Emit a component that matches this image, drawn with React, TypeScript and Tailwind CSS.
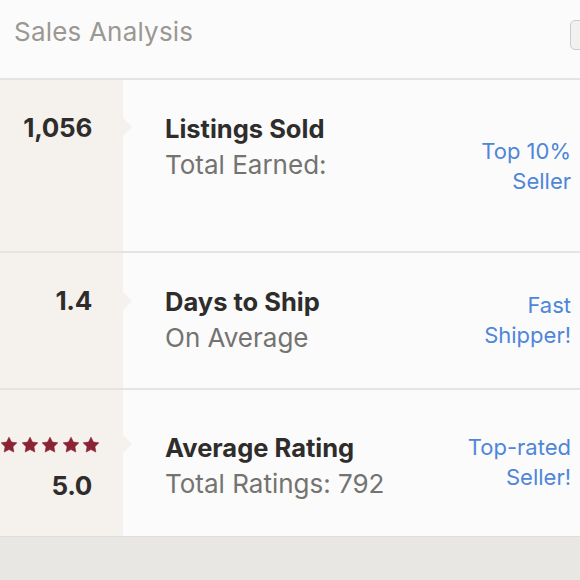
import React from "react";

type Row = {
  height: string;
  value: React.ReactNode;
  title: string;
  sub: string;
  badge: string[];
  textPt: string;
  badgePt: string;
  notchTop: string;
};

function Star() {
  return (
    <svg width="18" height="18" viewBox="0 0 24 24" className="shrink-0">
      <path
        d="M12 1.5L15.23 8.05 22.46 9.1 17.23 14.2 18.47 21.4 12 18 5.53 21.4 6.77 14.2 1.54 9.1 8.77 8.05z"
        fill="#8a2334"
        stroke="#8a2334"
        strokeWidth="0.8"
        strokeLinejoin="round"
      />
    </svg>
  );
}

const num = "text-[26px] font-bold text-[#2e2d2c] leading-none pr-[31px] tracking-[-0.3px]";

const rows: Row[] = [
  {
    height: "h-[173px] border-b-2 border-[#e6e4e1]",
    value: <div className={`${num} pt-[35px]`}>1,056</div>,
    title: "Listings Sold",
    sub: "Total Earned:",
    badge: ["Top 10%", "Seller"],
    textPt: "pt-[34px]",
    badgePt: "pt-[56px]",
    notchTop: "top-[38px]",
  },
  {
    height: "h-[137px] border-b-2 border-[#e6e4e1]",
    value: <div className={`${num} pt-[35px]`}>1.4</div>,
    title: "Days to Ship",
    sub: "On Average",
    badge: ["Fast", "Shipper!"],
    textPt: "pt-[34px]",
    badgePt: "pt-[37px]",
    notchTop: "top-[39px]",
  },
  {
    height: "h-[146px]",
    value: (
      <div className="flex flex-col items-end pt-[46px]">
        <div className="flex gap-[2.5px] pr-[25px] -mr-[2px]">
          <Star />
          <Star />
          <Star />
          <Star />
          <Star />
        </div>
        <div className={`${num} mt-[19px]`}>5.0</div>
      </div>
    ),
    title: "Average Rating",
    sub: "Total Ratings: 792",
    badge: ["Top-rated", "Seller!"],
    textPt: "pt-[43px]",
    badgePt: "pt-[42px]",
    notchTop: "top-[45px]",
  },
];

export default function App() {
  return (
    <div
      className="w-[580px] h-[580px] overflow-hidden bg-[#fbfbfb] flex flex-col"
      style={{ fontFamily: "Inter, 'Open Sans', sans-serif" }}
    >
      <div className="h-[80px] shrink-0 flex items-start justify-between pl-[14px] border-b-2 border-[#e6e4e1]">
        <h2 className="text-[26px] text-[#9b9893] mt-[16px] leading-tight tracking-[0.2px]">Sales Analysis</h2>
        <div className="mt-[20px] -mr-[12px] w-[22px] h-[30px] rounded-[5px] border border-[#cfcdca] bg-[#f2f1ef]" />
      </div>

      {rows.map((r) => (
        <div key={r.title} className={`${r.height} shrink-0 flex`}>
          <div className="relative w-[123px] shrink-0 bg-[#f5f2ee] flex flex-col items-end">
            {r.value}
            <span
              className={`absolute ${r.notchTop} -right-[9px] w-0 h-0 border-y-[9px] border-y-transparent border-l-[9px] border-l-[#f5f2ee]`}
            />
          </div>
          <div className="flex-1 flex justify-between pl-[42px] pr-[9px]">
            <div className={`flex flex-col ${r.textPt}`}>
              <div className="text-[25.5px] font-bold text-[#2e2d2c] leading-[30px]">{r.title}</div>
              <div className="text-[26px] text-[#747370] leading-[42px]">{r.sub}</div>
            </div>
            <div className={`text-right text-[22px] text-[#4f86d8] leading-[30px] ${r.badgePt}`}>
              {r.badge.map((b) => (
                <div key={b}>{b}</div>
              ))}
            </div>
          </div>
        </div>
      ))}

      <div className="flex-1 bg-[#e9e7e4] border-t border-[#e0ddd9]" />
    </div>
  );
}
